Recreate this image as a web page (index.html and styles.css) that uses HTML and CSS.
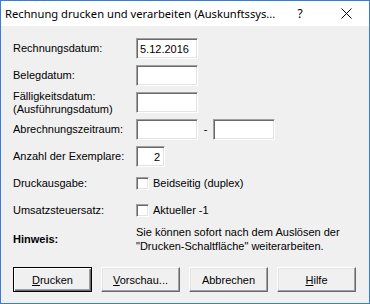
FILE: index.html
```html
<html>
<head>
<meta charset="utf-8">
<title>Rechnung drucken und verarbeiten</title>
<link rel="stylesheet" href="styles.css">
</head>

<body>
<div class="window">

<div class="titlebar">
<span class="caption">Rechnung drucken und verarbeiten (Auskunftssys...</span>
<span class="help">?</span>
<span class="close">
<svg width="11" height="11" viewBox="0 0 11 11"><path d="M0.5 0.5 L10.5 10.5 M10.5 0.5 L0.5 10.5" stroke="#000" stroke-width="1" fill="none"/></svg>
</span>
</div>

<div class="content">

<div class="form">
<div class="label">Rechnungsdatum:</div>
<div class="field"><input class="edit" type="text" value="5.12.2016"></div>

<div class="label">Belegdatum:</div>
<div class="field"><input class="edit" type="text" value=""></div>

<div class="label">Fälligkeitsdatum:<br>(Ausführungsdatum)</div>
<div class="field"><input class="edit" type="text" value=""></div>

<div class="label">Abrechnungszeitraum:</div>
<div class="field">
<input class="edit" type="text" value="">
<span class="dash">-</span>
<input class="edit" type="text" value="">
</div>

<div class="label">Anzahl der Exemplare:</div>
<div class="field"><input class="edit small" type="text" value="2"></div>

<div class="label">Druckausgabe:</div>
<div class="field"><span class="check"></span>Beidseitig (duplex)</div>

<div class="label">Umsatzsteuersatz:</div>
<div class="field"><span class="check"></span>Aktueller -1</div>
</div>

<div class="hint">
<div class="hint-label">Hinweis:</div>
<div class="hint-text">Sie können sofort nach dem Auslösen der<br>"Drucken-Schaltfläche" weiterarbeiten.</div>
</div>

<div class="buttons">
<button class="btn default"><u>D</u>rucken</button>
<button class="btn"><u>V</u>orschau...</button>
<button class="btn">Abbrechen</button>
<button class="btn"><u>H</u>ilfe</button>
</div>

</div>
</div>
</body>
</html>
```

FILE: styles.css
```css
html, body {
	margin: 0;
	padding: 0;
}
body {
	background: #f0f0f0;
	font-family: "Liberation Sans", Arial, sans-serif;
	font-size: 11px;
	color: #000;
}
.window {
	box-sizing: border-box;
	width: 370px;
	height: 304px;
	border: 1px solid #3b7cd6;
	background: #f0f0f0;
}
.titlebar {
	height: 25px;
	background: #fff;
	display: flex;
	align-items: center;
	font-family: "Noto Sans", sans-serif;
	font-size: 11.2px;
}
.caption {
	padding-left: 4px;
	flex: 1;
	white-space: nowrap;
}
.help {
	width: 20px;
	text-align: center;
	font-size: 12px;
	margin-right: 31px;
}
.close {
	width: 11px;
	height: 11px;
	margin-right: 17px;
	display: flex;
}
.content {
	padding: 12px 12px 0 12px;
}
.form {
	display: grid;
	grid-template-columns: 123px auto;
	grid-auto-rows: 21px;
	row-gap: 6px;
}
.label {
	display: flex;
	align-items: center;
	line-height: 13px;
}
.field {
	display: flex;
	align-items: center;
	line-height: 13px;
}
.edit {
	box-sizing: border-box;
	width: 62px;
	height: 21px;
	margin: 0;
	padding: 0 3px;
	font-family: "Liberation Sans", Arial, sans-serif;
	font-size: 11px;
	color: #000;
	background: #fff;
	border: 1px solid;
	border-color: #a0a0a0 #fff #fff #a0a0a0;
	box-shadow: inset 1px 1px #696969, inset -1px -1px #e3e3e3;
	outline: none;
}
.edit.small {
	width: 29px;
	text-align: right;
	padding-right: 4px;
}
.dash {
	width: 15px;
	text-align: center;
}
.check {
	box-sizing: border-box;
	width: 13px;
	height: 13px;
	margin-right: 4px;
	background: #fff;
	border: 1px solid;
	border-color: #a0a0a0 #fff #fff #a0a0a0;
	box-shadow: inset 1px 1px #696969, inset -1px -1px #e3e3e3;
}
.hint {
	display: flex;
	align-items: center;
	margin-top: 4px;
	line-height: 14px;
}
.hint-label {
	width: 123px;
	font-weight: bold;
}
.buttons {
	display: flex;
	gap: 9px;
	margin-top: 14px;
}
.btn {
	box-sizing: border-box;
	width: 79px;
	height: 25px;
	margin: 0;
	padding: 0;
	font-family: "Liberation Sans", Arial, sans-serif;
	font-size: 11px;
	color: #000;
	background: #f0f0f0;
	border: 1px solid;
	border-color: #fff #696969 #696969 #fff;
	box-shadow: inset -1px -1px #a0a0a0, inset 1px 1px #e3e3e3;
}
.btn.default {
	border-color: #000;
	box-shadow: inset 1px 1px #fff, inset -1px -1px #696969, inset -2px -2px #a0a0a0;
}
```
